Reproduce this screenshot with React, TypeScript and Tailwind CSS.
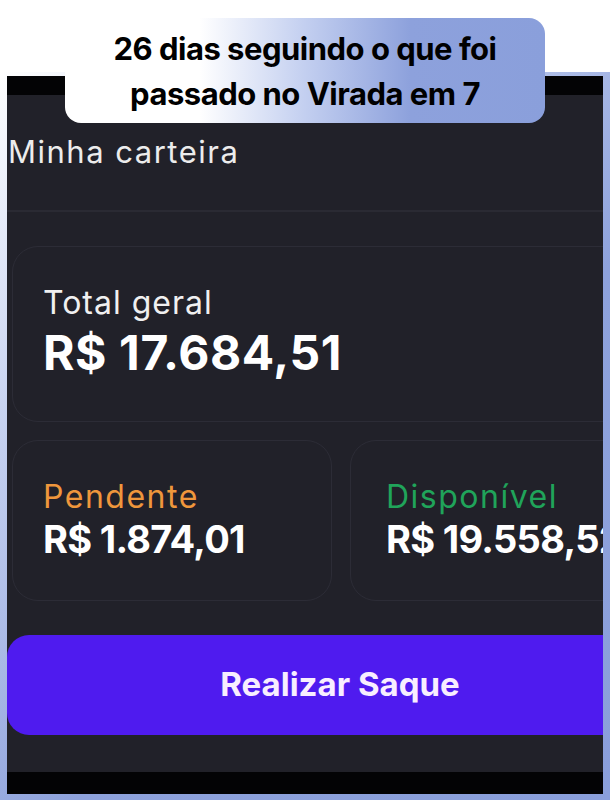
import React from "react";

export default function App() {
  return (
    <div className="relative w-[610px] h-[800px] bg-white overflow-hidden" style={{ fontFamily: "Inter, 'Noto Sans', sans-serif" }}>
      <div className="pt-[72px]">
        <div className="h-[728px] pl-[7px] pr-[7px] pt-[4px] pb-[6px] bg-[linear-gradient(135deg,#ffffff_0%,#c9d4f1_25%,#8ea2dc_60%,#8a9fdb_100%)]">
          <div className="h-full w-full overflow-hidden flex flex-col bg-[#212129]">
            <div className="h-[19px] shrink-0 bg-[#030305]" />
            <div className="flex-1 w-[666px] flex flex-col">
              <div className="pt-[39px] pl-[1px] text-[31px] leading-[36px] text-[#ececec] tracking-[1.5px]">Minha carteira</div>
              <div className="mt-[40px] h-[2px] bg-[#2a2a33]" />
              <div className="mt-[34px] ml-[5px] h-[176px] rounded-[26px] border-[1.5px] border-[#2c2c36] pl-[30px] pt-[36px]">
                <div className="text-[32px] leading-[40px] text-[#f0f0f0] tracking-[1px]">Total geral</div>
                <div className="mt-[3px] text-[48px] leading-[54px] font-bold text-white tracking-[0.6px]">R$ 17.684,51</div>
              </div>
              <div className="mt-[18px] ml-[5px] flex gap-[18px]">
                <div className="w-[320px] h-[161px] rounded-[26px] border-[1.5px] border-[#2c2c36] pl-[30px] pt-[36px]">
                  <div className="text-[32px] leading-[40px] text-[#ef973c] tracking-[1.5px]">Pendente</div>
                  <div className="text-[38px] leading-[44px] font-bold text-white tracking-[-0.7px]">R$ 1.874,01</div>
                </div>
                <div className="w-[320px] h-[161px] rounded-[26px] border-[1.5px] border-[#2c2c36] pl-[35px] pt-[36px]">
                  <div className="text-[32px] leading-[40px] text-[#20a45a] tracking-[1.5px]">Disponível</div>
                  <div className="text-[38px] leading-[44px] font-bold text-white tracking-[-0.7px]">R$ 19.558,52</div>
                </div>
              </div>
              <div className="mt-[34px] h-[100px] rounded-[22px] bg-[#4f1bef] flex items-center justify-center">
                <span className="text-[33px] font-bold text-[#f8eeff] tracking-[0px]">Realizar Saque</span>
              </div>
            </div>
            <div className="h-[22px] shrink-0 bg-[#030305]" />
          </div>
        </div>
      </div>
      <div className="absolute left-[65px] top-[18px] w-[480px] h-[105px] rounded-[16px] bg-[linear-gradient(90deg,#ffffff_0%,#ffffff_28%,#c3cff0_50%,#8da1dc_72%,#8a9fdb_100%)] flex flex-col items-center justify-center">
        <div className="text-[31px] leading-[45px] font-bold text-black tracking-[-0.5px] text-center">26 dias seguindo o que foi</div>
        <div className="text-[31px] leading-[45px] font-bold text-black tracking-[-0.5px] text-center">passado no Virada em 7</div>
      </div>
    </div>
  );
}
